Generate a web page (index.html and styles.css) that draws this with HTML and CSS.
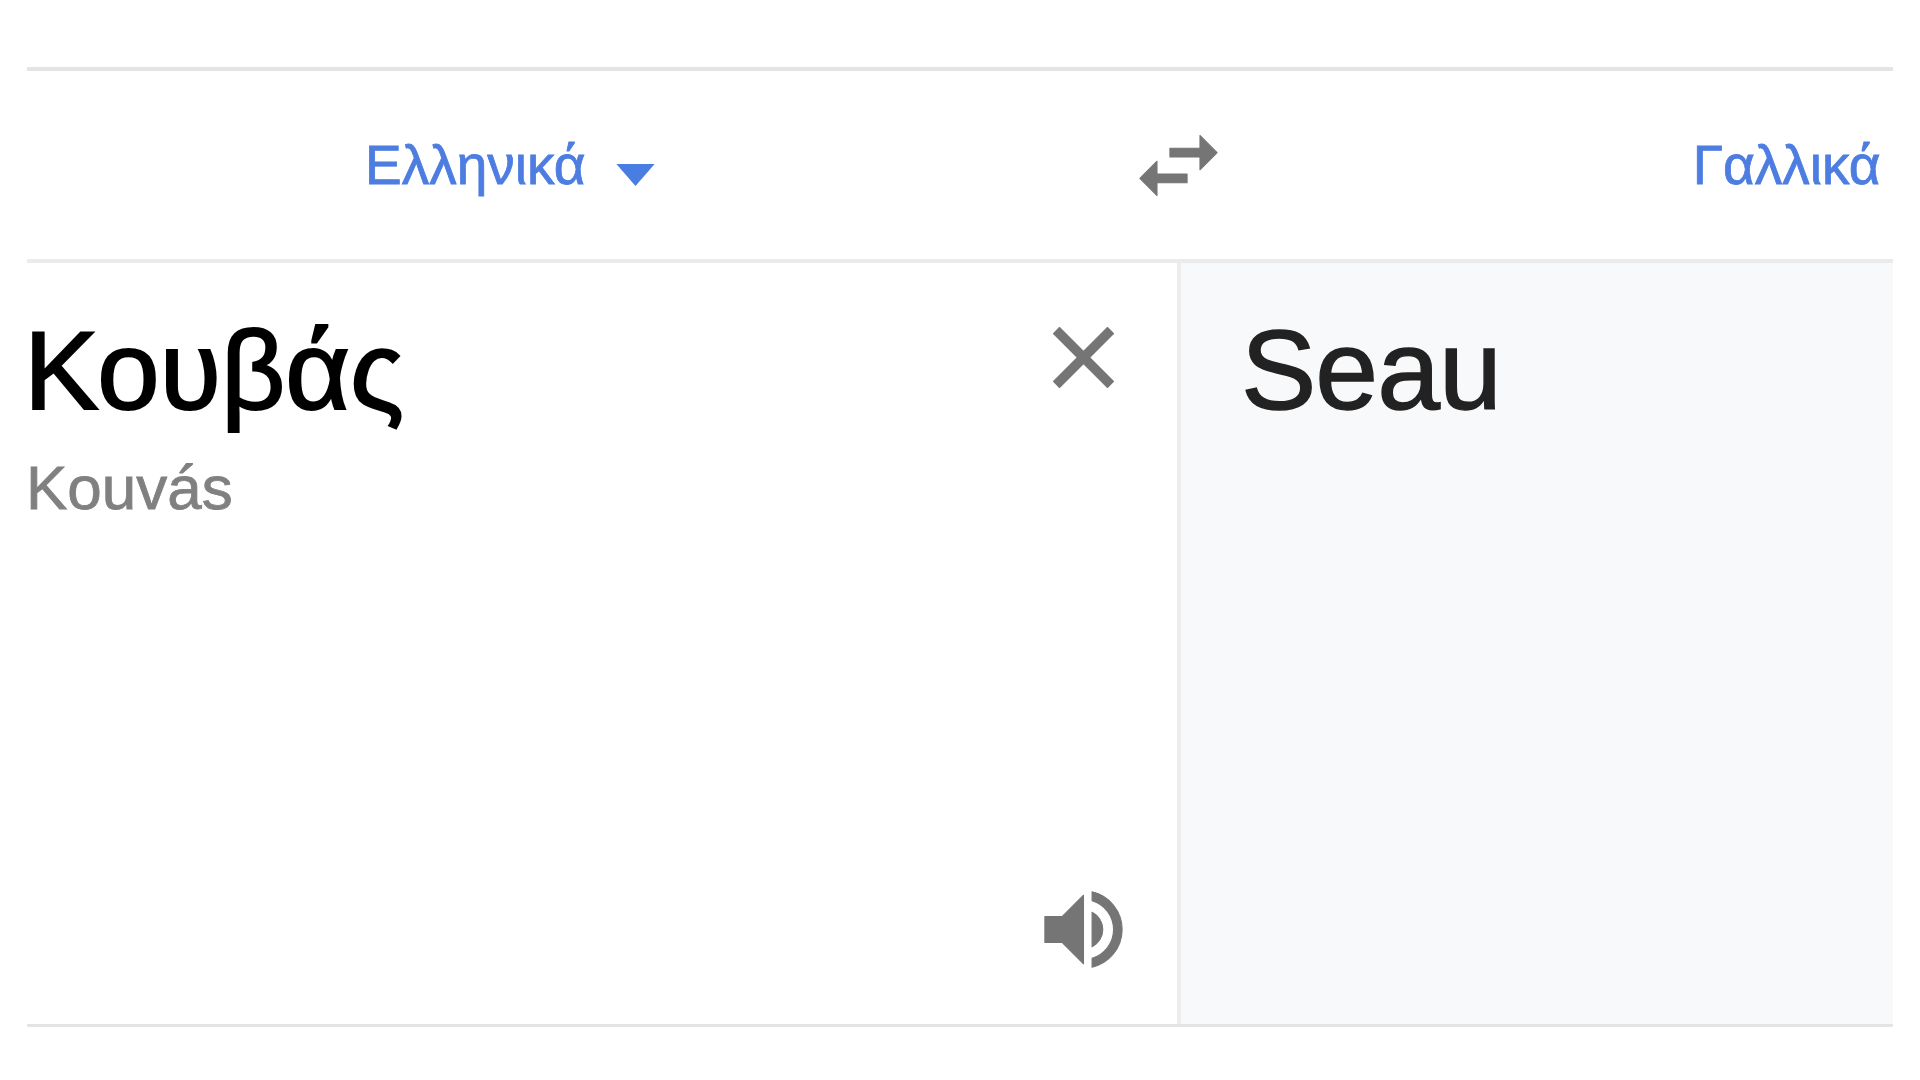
FILE: index.html
```html
<!DOCTYPE html>
<html lang="el">
<head>
<meta charset="utf-8">
<title>Μετάφραση</title>
<link rel="stylesheet" href="styles.css">
</head>
<body>
<main class="translator">
  <header class="lang-bar">
    <button class="lang lang-source" type="button">
      <span>Ελληνικά</span>
      <svg class="caret" viewBox="0 0 40 23" aria-hidden="true"><path d="M0 0h40L20 23z"/></svg>
    </button>
    <svg class="icon icon-swap icon-bold" viewBox="0 0 24 24" aria-hidden="true"><path d="M6.99 11L3 15l3.99 4v-3H14v-2H6.99v-3zM21 9l-4-4v3h-7v2h7v3l4-4z"/></svg>
    <button class="lang lang-target" type="button"><span>Γαλλικά</span></button>
  </header>
  <section class="panels">
    <div class="source">
      <div class="source-text">
        <div class="word">Κουβάς</div>
        <div class="translit">Kouvás</div>
      </div>
      <div class="tools">
        <svg class="icon icon-bold" viewBox="0 0 24 24" aria-hidden="true"><path d="M19 6.41L17.59 5 12 10.59 6.41 5 5 6.41 10.59 12 5 17.59 6.41 19 12 13.41 17.59 19 19 17.59 13.41 12z"/></svg>
        <svg class="icon icon-bold" viewBox="0 0 24 24" aria-hidden="true"><path d="M3 9v6h4l5 5V4L7 9H3zm13.5 3c0-1.77-1.02-3.29-2.5-4.03v8.05c1.48-.73 2.5-2.25 2.5-4.02zM14 3.23v2.06c2.89.86 5 3.54 5 6.71s-2.11 5.85-5 6.71v2.06c4.01-.91 7-4.49 7-8.77s-2.99-7.86-7-8.77z"/></svg>
      </div>
    </div>
    <div class="target">
      <div class="result">Seau</div>
    </div>
  </section>
</main>
</body>
</html>
```
FILE: styles.css
```css
html, body {
  margin: 0;
  height: 100%;
  background: #fff;
}
body {
  font-family: "Liberation Sans", Arial, sans-serif;
  overflow: hidden;
}
.translator {
  margin: 67px 27px 0;
  border-top: 4px solid #e3e4e6;
  border-bottom: 3px solid #e3e4e6;
  filter: blur(0.6px);
}
.lang-bar {
  height: 188px;
  display: flex;
  align-items: center;
  border-bottom: 4px solid #ebebeb;
}
.lang {
  display: flex;
  align-items: center;
  padding: 0;
  border: 0;
  background: none;
  font: inherit;
  font-size: 55px;
  color: #4d7de0;
  -webkit-text-stroke: 0.8px #4d7de0;
}
.lang-source { margin-left: 338px; }
.caret {
  width: 39px;
  height: 22px;
  margin-left: 30px;
  margin-top: 20px;
  fill: #4a7de2;
}
.icon-swap { margin-left: 472px; }
.lang-target { margin-left: 463px; }
.icon {
  width: 103px;
  height: 103px;
  flex: none;
  fill: #757575;
}
.icon-bold {
  stroke: #757575;
  stroke-width: 0.25;
  stroke-linejoin: round;
}
.panels {
  height: 761px;
  display: flex;
}
.source {
  width: 1108px;
  flex: none;
  display: flex;
  justify-content: space-between;
  padding: 43px 42px 43px 0;
  border-right: 4px solid #eceded;
}
.word {
  margin-left: -3px;
  font-size: 112px;
  line-height: 130px;
  color: #000;
  -webkit-text-stroke: 2px #000;
}
.translit {
  margin: 17px 0 0 -1px;
  font-size: 62px;
  line-height: 70px;
  color: #808080;
  -webkit-text-stroke: 0.8px #808080;
}
.tools {
  display: flex;
  flex-direction: column;
  justify-content: space-between;
}
.target {
  flex: 1;
  background: #f8f9fa;
  padding: 42px 60px;
}
.result {
  font-size: 113px;
  line-height: 130px;
  letter-spacing: -1px;
  color: #222;
  -webkit-text-stroke: 1.4px #222;
}
```
